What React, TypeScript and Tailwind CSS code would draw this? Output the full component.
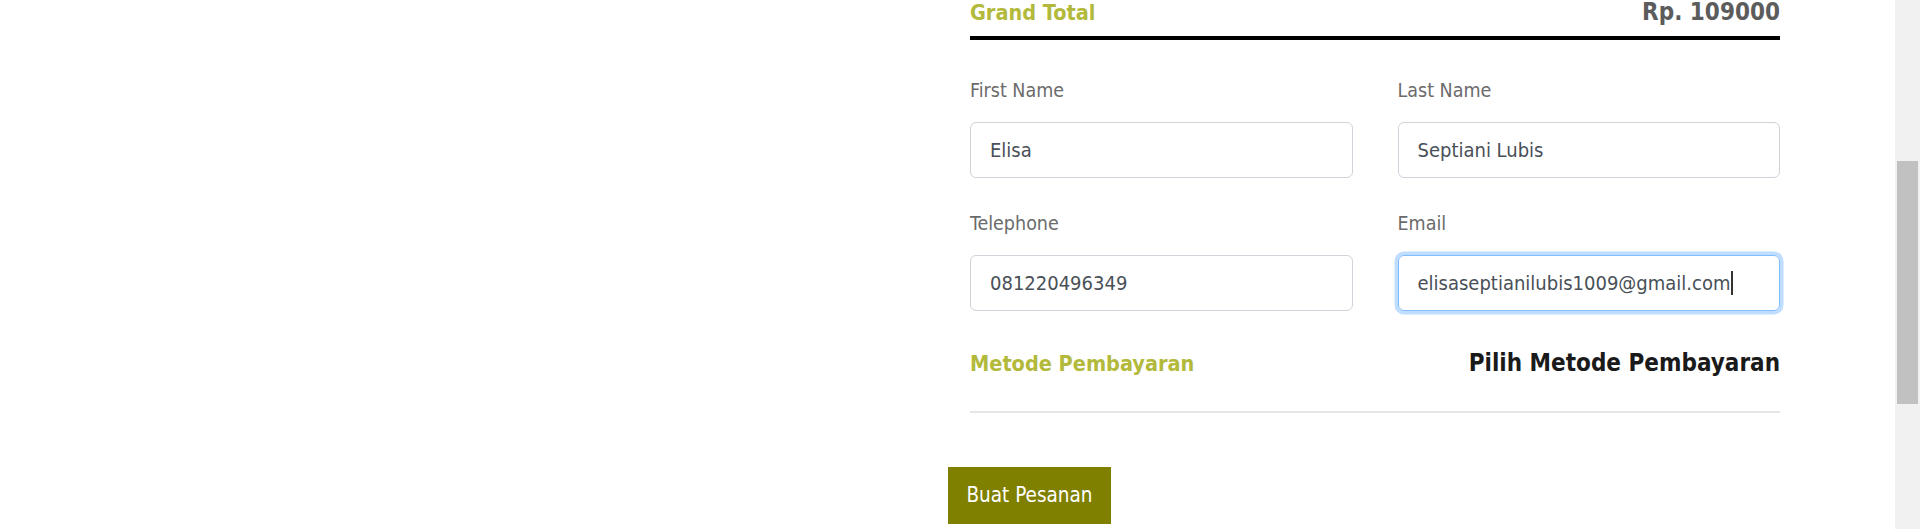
import React from "react";

const font = { fontFamily: "'DejaVu Sans Condensed', 'Liberation Sans', sans-serif" };

function Field({ label, value, focused }: { label: string; value: string; focused?: boolean }) {
  return (
    <div className="flex flex-col">
      <div className="text-[19.5px] leading-[21px] text-[#6b6b6b]">{label}</div>
      <div
        className={
          focused
            ? "mt-[21px] flex h-[56px] items-center rounded-[6px] border border-[#80bdff] pl-[19px] text-[20px] text-[#495057] shadow-[0_0_0_3.5px_rgba(0,123,255,0.25)]"
            : "mt-[21px] flex h-[56px] items-center rounded-[6px] border border-[#ced4da] pl-[19px] text-[20px] text-[#495057]"
        }
      >
        <span>{value}</span>
        {focused && <span className="ml-[1px] inline-block h-[24px] w-[2px] bg-[#333]" />}
      </div>
    </div>
  );
}

export default function App() {
  return (
    <div className="flex h-[529px] w-full overflow-hidden bg-white" style={font}>
      <div className="flex-1">
        <div className="ml-[948px] w-[832px]">
          <div className="pl-[22px]">
            <div className="-mt-[1px] flex items-baseline justify-between">
              <span className="text-[21.5px] font-bold leading-[26px] text-[#b2b93b]">Grand Total</span>
              <span className="text-[24px] font-bold leading-[26px] text-[#5c5c5c]">Rp. 109000</span>
            </div>
            <div className="mt-[10px] h-[4px] bg-black" />
            <div className="mt-[40px] grid grid-cols-2 gap-x-[45px] gap-y-[35px]">
              <Field label="First Name" value="Elisa" />
              <Field label="Last Name" value="Septiani Lubis" />
              <Field label="Telephone" value="081220496349" />
              <Field label="Email" value="elisaseptianilubis1009@gmail.com" focused />
            </div>
            <div className="mt-[39px] flex items-baseline justify-between">
              <span className="text-[21.5px] font-bold leading-[26px] text-[#b2b93b]">Metode Pembayaran</span>
              <span className="text-[24px] font-bold leading-[26px] text-[#1a1a1a]">Pilih Metode Pembayaran</span>
            </div>
            <div className="mt-[34px] h-[2px] bg-[#e6e6e6]" />
          </div>
          <button className="mt-[54px] h-[57px] w-[163px] bg-[#808000] text-[20.5px] text-white">
            Buat Pesanan
          </button>
        </div>
      </div>
      <div className="w-[25px] bg-[#f1f1f1] px-[2px] pt-[161px]">
        <div className="h-[243px] bg-[#c1c1c1]" />
      </div>
    </div>
  );
}
